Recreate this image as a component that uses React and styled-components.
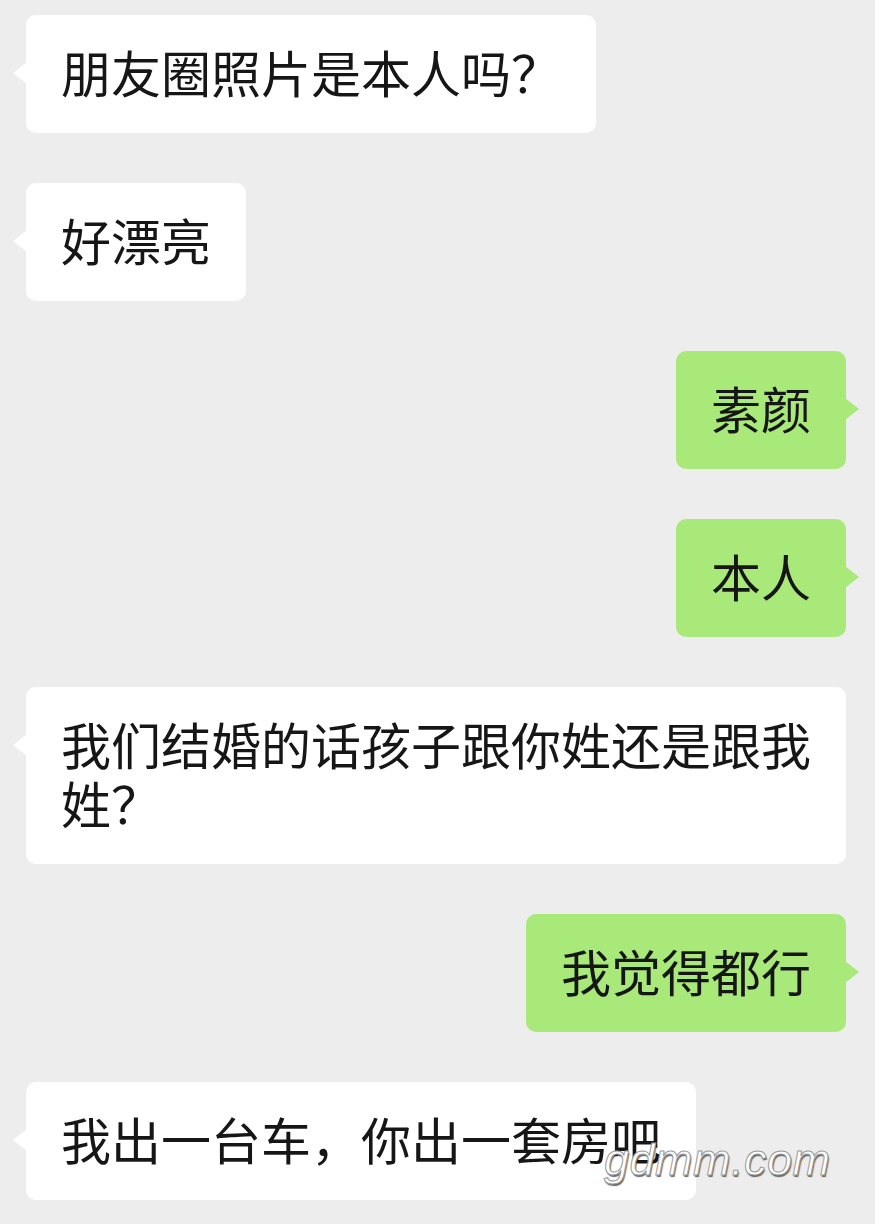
import React from "react";
import styled, { createGlobalStyle } from "styled-components";

const GlobalStyle = createGlobalStyle`
  html, body {
    margin: 0;
    padding: 0;
    background: #ededed;
  }
`;

const Page = styled.div`
  position: relative;
  min-height: 1224px;
  box-sizing: border-box;
  padding: 15px 29px 0 26px;
  display: flex;
  flex-direction: column;
  gap: 50px;
  background: #ededed;
  font-family: "Noto Sans CJK SC", "Noto Sans", sans-serif;
`;

const Row = styled.div`
  display: flex;
  justify-content: ${(p) => (p.$mine ? "flex-end" : "flex-start")};
`;

const Bubble = styled.div`
  position: relative;
  max-width: 820px;
  box-sizing: border-box;
  padding: 27px 35px 32px;
  border-radius: 10px;
  background: ${(p) => (p.$mine ? "#a9e97a" : "#ffffff")};
  color: #161616;
  font-size: 50px;
  line-height: 59px;
  word-break: break-all;

  &::before {
    content: "";
    position: absolute;
    top: 47px;
    ${(p) => (p.$mine ? "right: -13px;" : "left: -13px;")}
    width: 0;
    height: 0;
    border-top: 11px solid transparent;
    border-bottom: 11px solid transparent;
    ${(p) =>
      p.$mine
        ? "border-left: 14px solid #a9e97a;"
        : "border-right: 14px solid #ffffff;"}
  }
`;

const Watermark = styled.div`
  position: absolute;
  left: 604px;
  top: 1137px;
  font-family: "Liberation Sans", Arial, sans-serif;
  font-style: italic;
  font-size: 45px;
  line-height: 1;
  color: #ffffff;
  -webkit-text-stroke: 1px #9a9a9a;
  text-shadow: 1px 2px 1px rgba(40, 40, 40, 0.7);
  letter-spacing: 0.5px;
  pointer-events: none;
`;

const messages = [
  { mine: false, text: "朋友圈照片是本人吗？" },
  { mine: false, text: "好漂亮" },
  { mine: true, text: "素颜" },
  { mine: true, text: "本人" },
  { mine: false, text: "我们结婚的话孩子跟你姓还是跟我姓？" },
  { mine: true, text: "我觉得都行" },
  { mine: false, text: "我出一台车，你出一套房吧" },
];

export default function App() {
  return (
    <>
      <GlobalStyle />
      <Page>
        {messages.map((m, i) => (
          <Row key={i} $mine={m.mine}>
            <Bubble $mine={m.mine}>{m.text}</Bubble>
          </Row>
        ))}
        <Watermark>gdmm.com</Watermark>
      </Page>
    </>
  );
}
